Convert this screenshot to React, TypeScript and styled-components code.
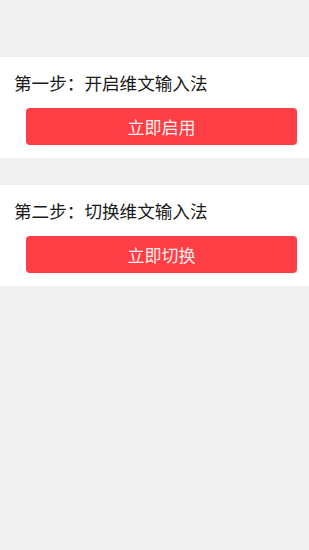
import React from 'react';
import styled, { createGlobalStyle } from 'styled-components';

const GlobalStyle = createGlobalStyle`
  html, body {
    margin: 0;
    padding: 0;
    background: #f0f0f0;
    font-family: "Noto Sans CJK SC", "Liberation Sans", sans-serif;
  }
  * {
    box-sizing: border-box;
  }
`;

const Page = styled.div`
  min-height: 550px;
  background: #f0f0f0;
  padding-top: 57px;
  display: flex;
  flex-direction: column;
  gap: 27px;
`;

const Card = styled.section`
  background: #ffffff;
  padding: 14px 12px 13px 14px;
  display: flex;
  flex-direction: column;
`;

const StepTitle = styled.div`
  font-size: 17.6px;
  line-height: 24px;
  color: #1a1a1a;
`;

const ActionButton = styled.button`
  margin: 13px 0 0 12px;
  height: 37px;
  border: none;
  border-radius: 4px;
  background: #fd3e44;
  color: #ffeeee;
  font-family: inherit;
  font-size: 17px;
  cursor: pointer;
`;

const steps = [
  { title: '第一步：开启维文输入法', action: '立即启用' },
  { title: '第二步：切换维文输入法', action: '立即切换' },
];

const App: React.FC = () => {
  return (
    <React.Fragment>
      <GlobalStyle />
      <Page>
        {steps.map((step, index: number) => (
          <Card key={index}>
            <StepTitle>{step.title}</StepTitle>
            <ActionButton>{step.action}</ActionButton>
          </Card>
        ))}
      </Page>
    </React.Fragment>
  );
};

export default App;
